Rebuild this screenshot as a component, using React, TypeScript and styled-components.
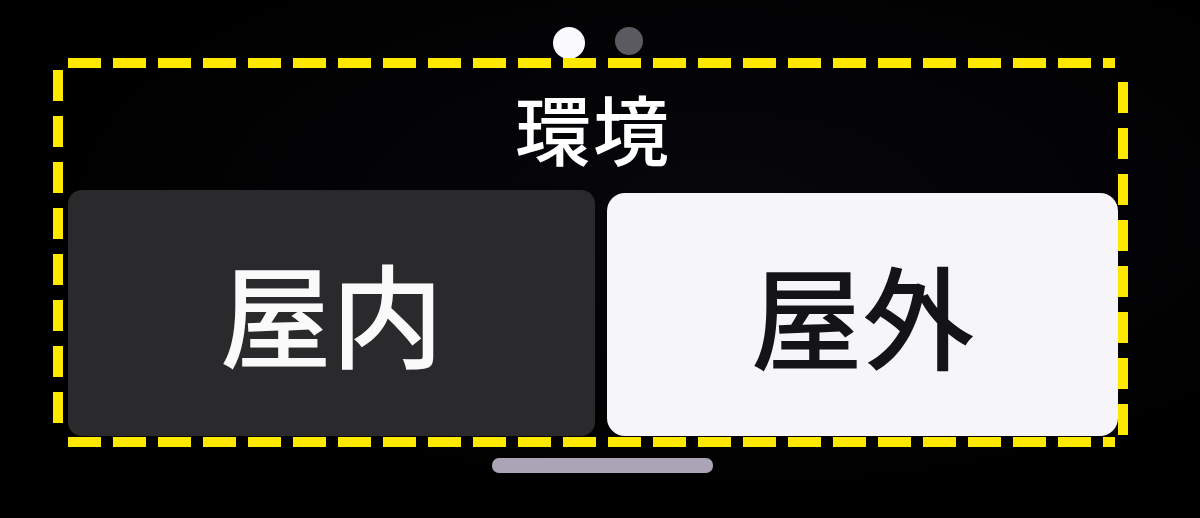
import React, { useState } from "react";
import styled, { createGlobalStyle } from "styled-components";

const GlobalStyle = createGlobalStyle`
  html, body {
    margin: 0;
    padding: 0;
    background: #000;
  }
  body {
    font-family: "Noto Sans CJK JP", "Noto Sans", sans-serif;
  }
`;

const Screen = styled.div`
  width: 1200px;
  height: 518px;
  background: radial-gradient(ellipse at 60% 40%, #07070c 0%, #000 70%);
  display: flex;
  flex-direction: column;
  overflow: hidden;
`;

const Pager = styled.div`
  display: flex;
  justify-content: center;
  gap: 30px;
  padding: 27px 0 0 0;
  margin-left: -4px;
  height: 31px;
`;

const Dot = styled.span<{ active?: boolean }>`
  width: ${(p) => (p.active ? 32 : 28)}px;
  height: ${(p) => (p.active ? 32 : 28)}px;
  border-radius: 50%;
  background: ${(p) => (p.active ? "#fbfbff" : "#5a5a60")};
`;

const dashH = (c: string) =>
  `repeating-linear-gradient(90deg, ${c} 0 33px, transparent 33px 45px)`;
const dashV = (c: string) =>
  `repeating-linear-gradient(180deg, ${c} 0 31px, transparent 31px 46px)`;

const Frame = styled.section`
  margin-left: 53px;
  width: 1075px;
  height: 389px;
  box-sizing: border-box;
  padding: 0 10px 11px 15px;
  display: flex;
  flex-direction: column;
  background-image: ${dashH("#ffe800")}, ${dashH("#ffe800")},
    ${dashV("#ffe800")}, ${dashV("#ffe800")};
  background-repeat: no-repeat;
  background-size: calc(100% - 28px) 10px, calc(100% - 28px) 10px,
    10px calc(100% - 24px), 10px calc(100% - 24px);
  background-position: 15px 0, 15px 100%, 0 12px, 100% 24px;
`;

const Title = styled.h1`
  margin: 0;
  height: 132px;
  display: flex;
  align-items: center;
  justify-content: center;
  padding-top: 6px;
  box-sizing: border-box;
  color: #fff;
  font-size: 76px;
  font-weight: 500;
  letter-spacing: 2px;
  line-height: 1;
`;

const Choices = styled.div`
  flex: 1;
  display: grid;
  grid-template-columns: 527px 1fr;
  gap: 12px;
`;

const Choice = styled.button<{ selected?: boolean }>`
  border: none;
  margin: 0;
  padding: 0 0 4px 0;
  border-radius: ${(p) => (p.selected ? 18 : 14)}px;
  margin-top: ${(p) => (p.selected ? 3 : 0)}px;
  background: ${(p) => (p.selected ? "#f6f6fa" : "#2a2a2c")};
  color: ${(p) => (p.selected ? "#141416" : "#fafafa")};
  font-family: "Noto Sans CJK JP", "Noto Sans", sans-serif;
  font-size: 112px;
  font-weight: 500;
  line-height: 1;
  letter-spacing: 0;
  display: flex;
  align-items: center;
  justify-content: center;
  cursor: pointer;
`;

const HomeBar = styled.div`
  margin: 11px 0 0 492px;
  width: 221px;
  height: 15px;
  border-radius: 7px;
  background: #aaa4b6;
`;

const options = ["屋内", "屋外"];

export default function App() {
  const [env, setEnv] = useState("屋外");
  return (
    <>
      <GlobalStyle />
      <Screen>
        <Pager>
          <Dot active />
          <Dot />
        </Pager>
        <Frame>
          <Title>環境</Title>
          <Choices>
            {options.map((o) => (
              <Choice key={o} selected={env === o} onClick={() => setEnv(o)}>
                {o}
              </Choice>
            ))}
          </Choices>
        </Frame>
        <HomeBar />
      </Screen>
    </>
  );
}
